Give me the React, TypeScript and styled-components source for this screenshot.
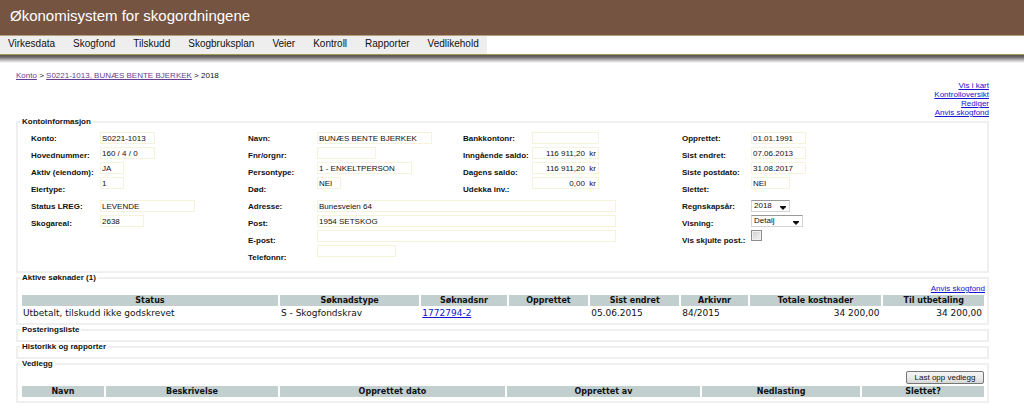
import React from "react";
import styled, { createGlobalStyle } from "styled-components";

const GlobalStyle = createGlobalStyle`
  *, *::before, *::after { box-sizing: border-box; }
  body {
    margin: 0;
    background: #fff;
    color: #111;
    font: 8px/10px "Liberation Sans", Arial, sans-serif;
  }
  input, select, button { font: inherit; color: inherit; margin: 0; }
`;

const Banner = styled.header`
  height: 36px;
  padding: 6px 10px 0;
  background: #755542;
  border-bottom: 1px solid #b5a27c;
`;

const Title = styled.h1`
  margin: 0;
  color: #fff;
  font-size: 15px;
  font-weight: 400;
  line-height: 20px;
`;

const NavBar = styled.nav`
  display: flex;
  height: 19px;
  border-bottom: 1px solid #a39b4a;
`;

const NavList = styled.ul`
  display: flex;
  margin: 0;
  padding: 0;
  list-style: none;
  background: #eee;
`;

const NavLink = styled.a`
  display: block;
  padding: 0 10px 0 8px;
  color: #111;
  font-size: 10px;
  line-height: 16px;
  text-decoration: none;

  li:last-child > & { padding-right: 8px; }
`;

const Shadow = styled.div`
  height: 8px;
  background: linear-gradient(#5a5458, #6b6668 25%, #b4b2b2 60%, #fff);
`;

const Page = styled.main`
  padding: 8px 35px 8px 16px;
`;

const Breadcrumb = styled.nav`
  line-height: 10px;
`;

const Link = styled.a<{ $visited?: boolean }>`
  color: ${(p) => (p.$visited ? "#6a3d94" : "#1414d2")};
  text-decoration: underline;
`;

const Actions = styled.div`
  display: flex;
  flex-direction: column;
  align-items: flex-end;
  line-height: 9px;
`;

const Panel = styled.fieldset`
  min-width: 0;
  margin: 0;
  padding: 0 1px 2px 2px;
  border: 2px solid #efefef;
`;

const PanelTitle = styled.legend`
  padding: 0 2px;
  font-weight: 700;
  line-height: 10px;
`;

const FormGrid = styled.div`
  display: grid;
  grid-template-columns: 217fr 215fr 219fr 304fr;
  padding: 3px 0 3px 11px;
`;

const Group = styled.div<{ $span?: number }>`
  display: flex;
  grid-column: span ${(p) => p.$span ?? 1};
  height: 68px;
`;

const Labels = styled.div`
  display: flex;
  flex-direction: column;
  flex: none;
  width: 69px;
  font-weight: 700;
  line-height: 17px;
  white-space: nowrap;
`;

const Fields = styled.div`
  display: flex;
  flex-direction: column;
  align-items: flex-start;
  gap: 3px;
  flex: 1;
  padding-top: 2px;
`;

const Value = styled.input<{ $w: number; $right?: boolean }>`
  width: ${(p) => p.$w}px;
  height: 12px;
  padding: 0 2px 0 1px;
  border: 1px solid #f6f3dc;
  background: #fff;
  line-height: 10px;
  text-align: ${(p) => (p.$right ? "right" : "left")};
`;

const SelectBox = styled.span<{ $w: number }>`
  display: grid;
  align-items: center;
  width: ${(p) => p.$w}px;
  height: 12px;
  border: 1px solid #d4d4d4;
  border-top-color: #999;

  > * { grid-area: 1 / 1; }
  > svg { justify-self: end; margin: 3px 3px 0 0; pointer-events: none; }
`;

const Select = styled.select`
  width: 100%;
  height: 10px;
  padding: 0 0 0 2px;
  border: 0;
  background: transparent;
  appearance: none;
  line-height: 10px;
`;

const Check = styled.input`
  width: 11px;
  height: 11px;
  appearance: none;
  border: 1px solid #8d8d8d;
  background: linear-gradient(135deg, #ccc, #f8f8f8);
  box-shadow: inset 0 0 0 1px #f2f2f2;

  &:checked { background: #555; }
`;

const PanelTools = styled.div<{ $tall?: boolean }>`
  display: flex;
  justify-content: flex-end;
  padding: ${(p) => (p.$tall ? "2px 2px 0" : "1px 1px 0")};
  line-height: 9px;
`;

const UploadButton = styled.button`
  height: 13px;
  padding: 0 6px;
  min-width: 78px;
  border: 1px solid #777;
  border-radius: 2px;
  background: linear-gradient(#f4f4f4, #ebebeb 50%, #d8d8d8);
  line-height: 11px;
`;

const Table = styled.table`
  width: 100%;
  table-layout: fixed;
  border-spacing: 2px;
  font-family: "DejaVu Sans", Verdana, sans-serif;
`;

const Th = styled.th<{ $w: number }>`
  width: ${(p) => p.$w}%;
  padding: 0;
  background: #c1cfcf;
  font-size: 8px;
  line-height: 11px;
`;

const Td = styled.td<{ $right?: boolean }>`
  padding: 0 2px 0 1px;
  font-size: 9px;
  line-height: 11px;
  white-space: nowrap;
  text-align: ${(p) => (p.$right ? "right" : "left")};
`;

const EmptyBody = styled.div`
  height: 3px;
`;

const menu = ["Virkesdata", "Skogfond", "Tilskudd", "Skogbruksplan", "Veier", "Kontroll", "Rapporter", "Vedlikehold"];

type Field = { id: string; label: string; value?: string; w: number; right?: boolean; options?: string[]; check?: boolean };

const groups: { span?: number; fields: Field[] }[] = [
  {
    fields: [
      { id: "konto", label: "Konto:", value: "S0221-1013", w: 55 },
      { id: "hovednummer", label: "Hovednummer:", value: "160 / 4 / 0", w: 55 },
      { id: "aktiv", label: "Aktiv (eiendom):", value: "JA", w: 24 },
      { id: "eiertype", label: "Eiertype:", value: "1", w: 24 },
    ],
  },
  {
    fields: [
      { id: "navn", label: "Navn:", value: "BUNÆS BENTE BJERKEK", w: 115 },
      { id: "fnr", label: "Fnr/orgnr:", value: "", w: 59 },
      { id: "persontype", label: "Persontype:", value: "1 - ENKELTPERSON", w: 95 },
      { id: "dod", label: "Død:", value: "NEI", w: 24 },
    ],
  },
  {
    fields: [
      { id: "bank", label: "Bankkontonr:", value: "", w: 67 },
      { id: "inngaende", label: "Inngående saldo:", value: "116 911,20  kr", w: 67, right: true },
      { id: "dagens", label: "Dagens saldo:", value: "116 911,20  kr", w: 67, right: true },
      { id: "udekka", label: "Udekka inv.:", value: "0,00  kr", w: 67, right: true },
    ],
  },
  {
    fields: [
      { id: "opprettet", label: "Opprettet:", value: "01.01.1991", w: 55 },
      { id: "endret", label: "Sist endret:", value: "07.06.2013", w: 55 },
      { id: "postdato", label: "Siste postdato:", value: "31.08.2017", w: 55 },
      { id: "slettet", label: "Slettet:", value: "NEI", w: 39 },
    ],
  },
  {
    fields: [
      { id: "lreg", label: "Status LREG:", value: "LEVENDE", w: 95 },
      { id: "areal", label: "Skogareal:", value: "2638", w: 44 },
    ],
  },
  {
    span: 2,
    fields: [
      { id: "adresse", label: "Adresse:", value: "Bunesveien 64", w: 299 },
      { id: "post", label: "Post:", value: "1954 SETSKOG", w: 299 },
      { id: "epost", label: "E-post:", value: "", w: 299 },
      { id: "telefon", label: "Telefonnr:", value: "", w: 79 },
    ],
  },
  {
    fields: [
      { id: "regnskapsar", label: "Regnskapsår:", w: 39, options: ["2018", "2017"] },
      { id: "visning", label: "Visning:", w: 52, options: ["Detalj", "Sum"] },
      { id: "skjulte", label: "Vis skjulte post.:", w: 11, check: true },
    ],
  },
];

function FieldControl({ field }: { field: Field }) {
  if (field.check) return <Check id={field.id} type="checkbox" />;
  if (field.options) {
    return (
      <SelectBox $w={field.w}>
        <Select id={field.id}>
          {field.options.map((o) => (
            <option key={o}>{o}</option>
          ))}
        </Select>
        <svg width="6" height="4" viewBox="0 0 6 4" aria-hidden="true">
          <path d="M0 0h6v1L3 4 0 1z" fill="#111" />
        </svg>
      </SelectBox>
    );
  }
  return <Value id={field.id} $w={field.w} $right={field.right} value={field.value} readOnly />;
}

const applicationColumns: [string, number][] = [
  ["Status", 27], ["Søknadstype", 14.7], ["Søknadsnr", 9], ["Opprettet", 8.4],
  ["Sist endret", 9.4], ["Arkivnr", 7], ["Totale kostnader", 13.9], ["Til utbetaling", 10.6],
];

const attachmentColumns: [string, number][] = [
  ["Navn", 8.6], ["Beskrivelse", 18.1], ["Opprettet dato", 23.6], ["Opprettet av", 20.3],
  ["Nedlasting", 16.6], ["Slettet?", 12.8],
];

function HeadRow({ columns }: { columns: [string, number][] }) {
  return (
    <thead>
      <tr>
        {columns.map(([name, w]) => (
          <Th key={name} scope="col" $w={w}>{name}</Th>
        ))}
      </tr>
    </thead>
  );
}

export default function App() {
  return (
    <>
      <GlobalStyle />
      <Banner>
        <Title>Økonomisystem for skogordningene</Title>
      </Banner>
      <NavBar>
        <NavList>
          {menu.map((item) => (
            <li key={item}><NavLink href="#">{item}</NavLink></li>
          ))}
        </NavList>
      </NavBar>
      <Shadow />
      <Page>
        <Breadcrumb>
          <Link href="#" $visited>Konto</Link> &gt;{" "}
          <Link href="#" $visited>S0221-1013, BUNÆS BENTE BJERKEK</Link> &gt; 2018
        </Breadcrumb>
        <Actions>
          <Link href="#">Vis i kart</Link>
          <Link href="#">Kontrolloversikt</Link>
          <Link href="#">Rediger</Link>
          <Link href="#">Anvis skogfond</Link>
        </Actions>
        <Panel>
          <PanelTitle>Kontoinformasjon</PanelTitle>
          <FormGrid>
            {groups.map((group) => (
              <Group key={group.fields[0].id} $span={group.span}>
                <Labels>
                  {group.fields.map((f) => (
                    <label key={f.id} htmlFor={f.id}>{f.label}</label>
                  ))}
                </Labels>
                <Fields>
                  {group.fields.map((f) => (
                    <FieldControl key={f.id} field={f} />
                  ))}
                </Fields>
              </Group>
            ))}
          </FormGrid>
        </Panel>
        <Panel>
          <PanelTitle>Aktive søknader (1)</PanelTitle>
          <PanelTools><Link href="#">Anvis skogfond</Link></PanelTools>
          <Table>
            <HeadRow columns={applicationColumns} />
            <tbody>
              <tr>
                <Td>Utbetalt, tilskudd ikke godskrevet</Td>
                <Td>S - Skogfondskrav</Td>
                <Td><Link href="#">1772794-2</Link></Td>
                <Td />
                <Td>05.06.2015</Td>
                <Td>84/2015</Td>
                <Td $right>34 200,00</Td>
                <Td $right>34 200,00</Td>
              </tr>
            </tbody>
          </Table>
        </Panel>
        <Panel>
          <PanelTitle>Posteringsliste</PanelTitle>
          <EmptyBody />
        </Panel>
        <Panel>
          <PanelTitle>Historikk og rapporter</PanelTitle>
          <EmptyBody />
        </Panel>
        <Panel>
          <PanelTitle>Vedlegg</PanelTitle>
          <PanelTools $tall><UploadButton type="button">Last opp vedlegg</UploadButton></PanelTools>
          <Table>
            <HeadRow columns={attachmentColumns} />
          </Table>
        </Panel>
      </Page>
    </>
  );
}
